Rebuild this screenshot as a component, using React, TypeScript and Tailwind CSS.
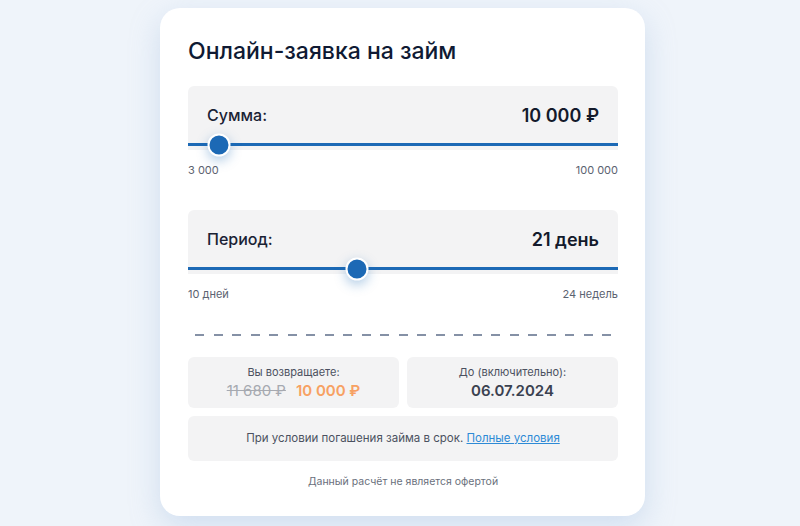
import React from "react";

const font = { fontFamily: "Inter, 'Open Sans', sans-serif" };

function SliderBlock({ label, value, pos, min, max }: { label: string; value: string; pos: number; min: string; max: string }) {
  return (
    <div>
      <div className="rounded-t-md bg-[#f3f3f4] pt-[18px] pb-[4px]">
        <div className="flex items-center justify-between px-[19px] h-[22px]">
          <span className="text-[16px] font-medium text-[#1a2234]">{label}</span>
          <span className="text-[18px] font-semibold text-[#131a2b]">{value}</span>
        </div>
        <div className="relative mt-[17px] h-[3px] bg-[#1c69b5]">
          <div
            className="absolute top-1/2 h-[23px] w-[23px] -translate-x-1/2 -translate-y-1/2 rounded-full border-2 border-white bg-[#1c69b5] shadow-[0_4px_12px_rgba(28,105,181,0.35)]"
            style={{ left: `${pos}px` }}
          />
        </div>
      </div>
      <div className="mt-[13px] flex justify-between text-[11px] leading-[14px] text-[#5b6270]">
        <span>{min}</span>
        <span>{max}</span>
      </div>
    </div>
  );
}

export default function App() {
  return (
    <div style={font} className="min-h-screen bg-[#eff4fa] pt-[8px]">
      <div className="ml-[160px] w-[485px] rounded-[20px] bg-white px-[28px] pr-[27px] pt-[30px] pb-[26px] shadow-[0_10px_30px_rgba(150,180,220,0.35)]">
        <h1 className="text-[23px] leading-[26px] font-medium text-[#0f1a33]">Онлайн-заявка на займ</h1>

        <div className="mt-[22px]">
          <SliderBlock label="Сумма:" value="10 000 ₽" pos={31} min="3 000" max="100 000" />
        </div>

        <div className="mt-[33px]">
          <SliderBlock label="Период:" value="21 день" pos={169} min="10 дней" max="24 недель" />
        </div>

        <div className="mt-[33px] flex justify-between px-[7px]">
          {Array.from({ length: 23 }).map((_, i) => (
            <span key={i} className="h-[2px] w-[9px] bg-[#8591a6]" />
          ))}
        </div>

        <div className="mt-[21px] grid grid-cols-2 gap-[8px]">
          <div className="flex h-[51px] flex-col items-center rounded-md bg-[#f3f3f4] pt-[8px]">
            <span className="text-[11px] leading-[14px] text-[#4b5160]">Вы возвращаете:</span>
            <div className="mt-[3px] flex items-baseline gap-[10px] text-[15px] leading-[18px]">
              <span className="text-[#a6a9b0] line-through">11 680 ₽</span>
              <span className="font-semibold text-[#f7a163]">10 000 ₽</span>
            </div>
          </div>
          <div className="flex h-[51px] flex-col items-center rounded-md bg-[#f3f3f4] pt-[8px]">
            <span className="text-[11px] leading-[14px] text-[#4b5160]">До (включительно):</span>
            <span className="mt-[3px] text-[15px] leading-[18px] font-semibold text-[#3a4150]">06.07.2024</span>
          </div>
        </div>

        <div className="mt-[8px] flex h-[45px] items-center justify-center rounded-md bg-[#f3f3f4] text-[11.5px] text-[#4b5160]">
          <span>
            При условии погашения займа в срок.{" "}
            <a className="text-[#2d8ad6] underline">Полные условия</a>
          </span>
        </div>

        <p className="mt-[13px] text-center text-[10.5px] text-[#6a707c]">Данный расчёт не является офертой</p>
      </div>
    </div>
  );
}
